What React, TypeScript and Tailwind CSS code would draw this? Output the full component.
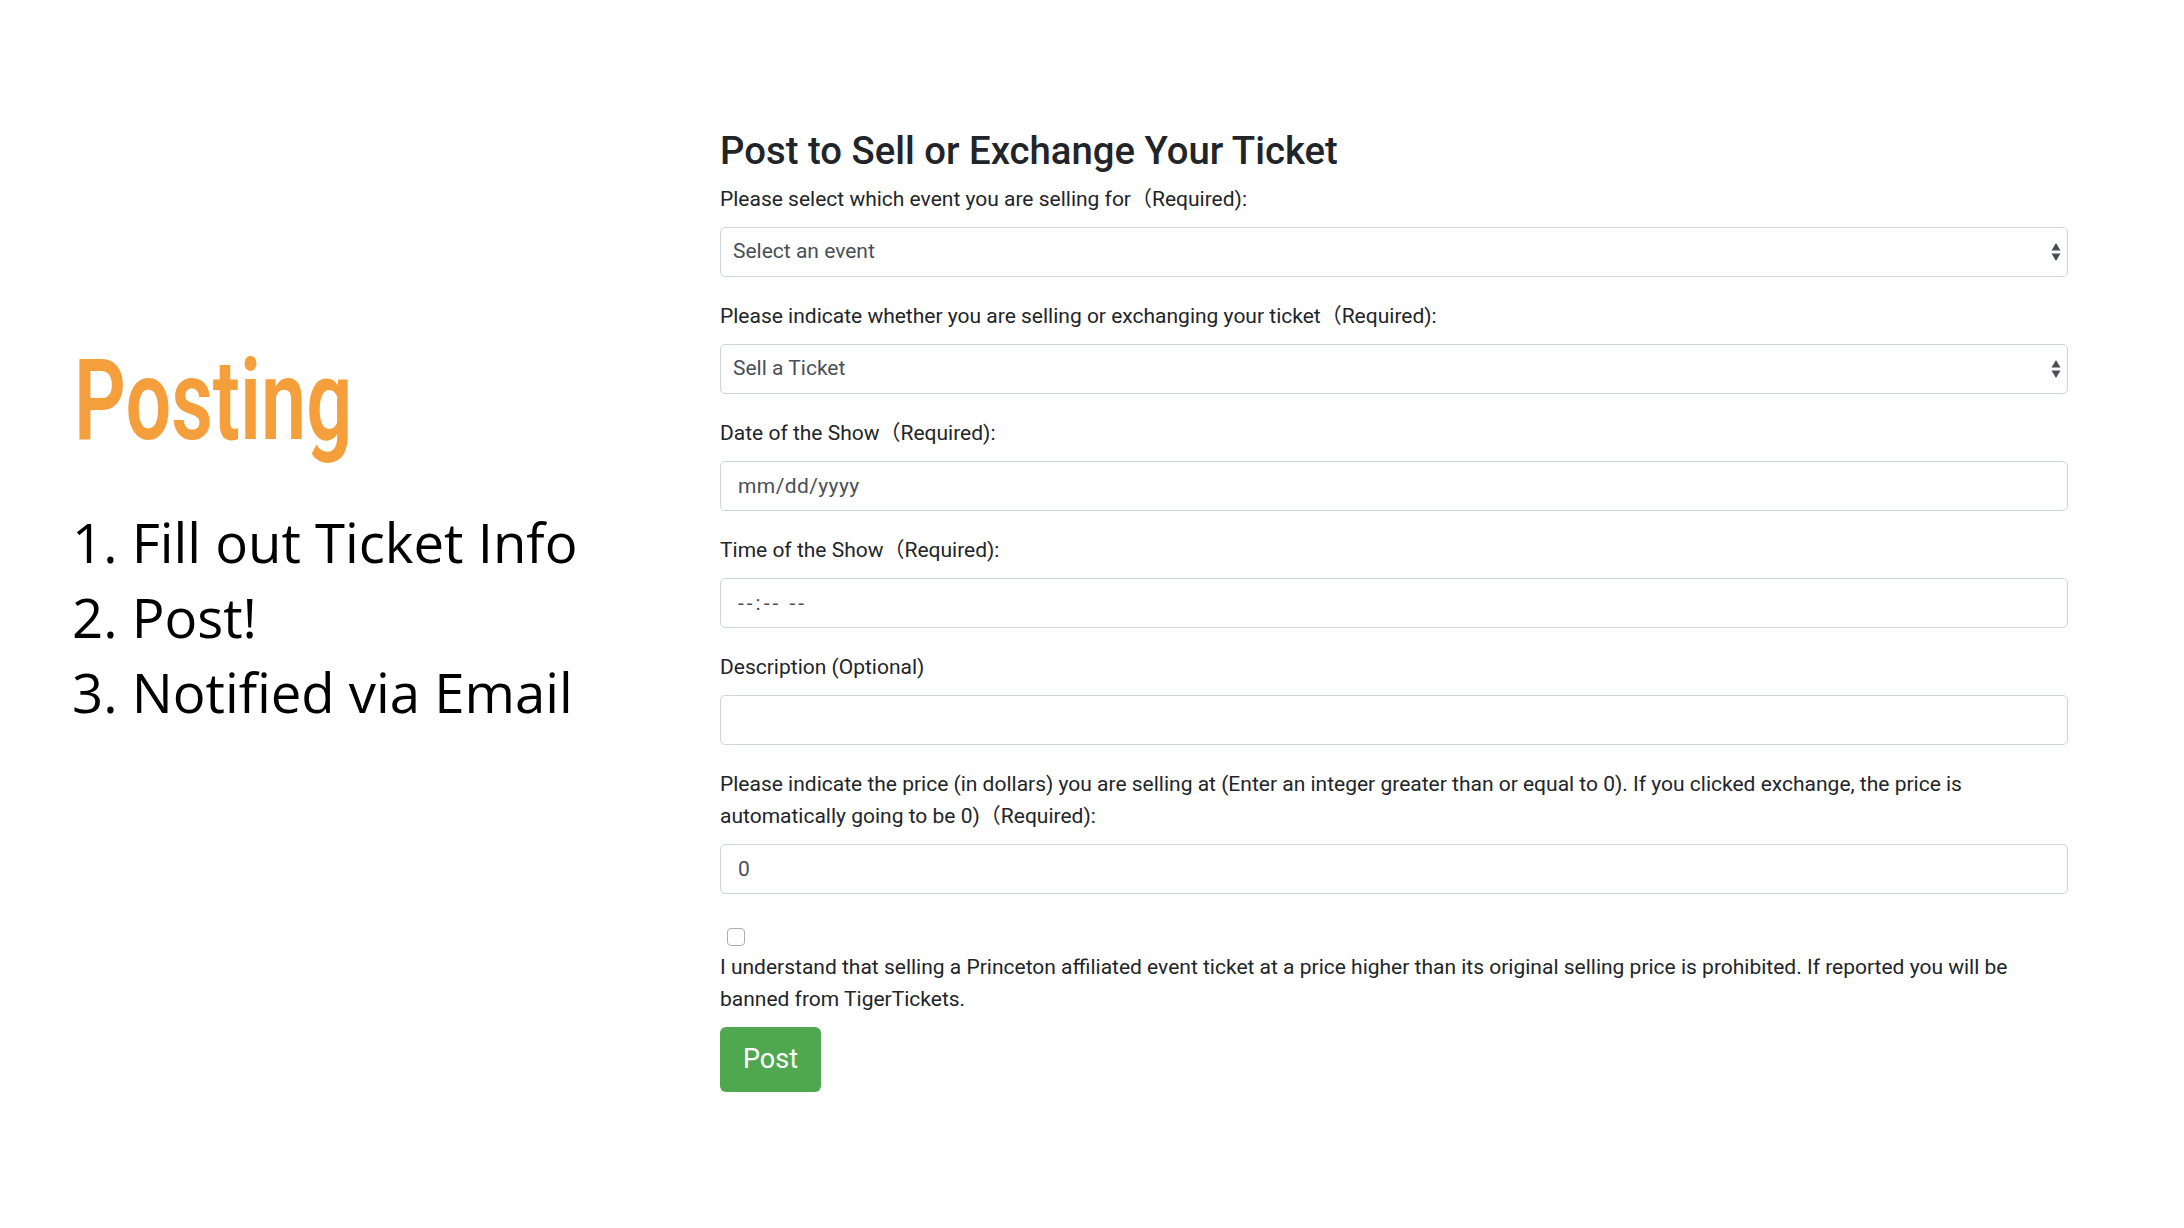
import React from "react";

const FORM_FONT = { fontFamily: "Roboto, 'Noto Sans CJK SC', sans-serif" };

const STEPS = ["1. Fill out Ticket Info", "2. Post!", "3. Notified via Email"];

function UpDownArrows(props: React.SVGProps<SVGSVGElement>) {
  return (
    <svg viewBox="0 0 10 20" aria-hidden="true" {...props}>
      <path d="M5 1L9.5 8.5H0.5z" fill="#4a4f55" />
      <path d="M5 19L9.5 11.5H0.5z" fill="#4a4f55" />
    </svg>
  );
}

function Label({ children }: { children: React.ReactNode }) {
  return <label className="block mb-[12px] text-[21px] leading-[32px] text-[#212529]">{children}</label>;
}

function SelectField({ options }: { options: string[] }) {
  return (
    <div className="relative">
      <select
        className="block w-full h-[50px] appearance-none rounded-[5px] border border-[#ced4da] bg-white pl-[12px] pr-[30px] text-[21px] text-[#495057] outline-none"
        style={FORM_FONT}
      >
        {options.map((o) => (
          <option key={o}>{o}</option>
        ))}
      </select>
      <UpDownArrows className="pointer-events-none absolute right-[7px] top-[15px] h-[20px] w-[10px]" />
    </div>
  );
}

function TextField({ placeholder, value, wide }: { placeholder?: string; value?: string; wide?: boolean }) {
  return (
    <input
      type="text"
      placeholder={placeholder}
      defaultValue={value}
      className={
        "block w-full h-[50px] rounded-[5px] border border-[#ced4da] bg-white px-[17px] text-[21px] text-[#495057] placeholder:text-[#495057] outline-none " +
        (wide ? "tracking-[3px]" : "tracking-[0.4px]")
      }
      style={FORM_FONT}
    />
  );
}

export default function App() {
  return (
    <div className="flex h-[1228px] w-full bg-white">
      <aside className="w-[720px] shrink-0 pl-[72px] pt-[343px]">
        <h1
          className="ml-[2px] inline-block origin-left scale-x-[0.71] text-[114px] leading-none font-semibold text-[#f49f3c]"
          style={{ fontFamily: "Roboto, sans-serif" }}
        >
          Posting
        </h1>
        <ol className="mt-[48px] text-[54.5px] leading-[75px] text-black" style={{ fontFamily: "'Open Sans', sans-serif" }}>
          {STEPS.map((s) => (
            <li key={s}>{s}</li>
          ))}
        </ol>
      </aside>

      <main className="w-[1348px] shrink-0 pt-[129px]" style={FORM_FONT}>
        <h2 className="mb-[10px] text-[38.3px] leading-[44px] font-medium text-[#212529]">
          Post to Sell or Exchange Your Ticket
        </h2>

        <div className="mb-[23px]">
          <Label>Please select which event you are selling for（Required):</Label>
          <SelectField options={["Select an event"]} />
        </div>

        <div className="mb-[23px]">
          <Label>Please indicate whether you are selling or exchanging your ticket（Required):</Label>
          <SelectField options={["Sell a Ticket", "Exchange a Ticket"]} />
        </div>

        <div className="mb-[23px]">
          <Label>Date of the Show（Required):</Label>
          <TextField placeholder="mm/dd/yyyy" />
        </div>

        <div className="mb-[23px]">
          <Label>Time of the Show（Required):</Label>
          <TextField placeholder="--:-- --" wide />
        </div>

        <div className="mb-[23px]">
          <Label>Description (Optional)</Label>
          <TextField />
        </div>

        <div>
          <Label>
            Please indicate the price (in dollars) you are selling at (Enter an integer greater than or equal to 0). If
            you clicked exchange, the price is automatically going to be 0)（Required):
          </Label>
          <TextField value="0" />
        </div>

        <div className="mt-[34px]">
          <input
            type="checkbox"
            className="ml-[7px] block h-[18px] w-[18px] appearance-none rounded-[4px] border border-[#a9adb2] bg-white"
          />
          <p className="mt-[5px] text-[21px] leading-[32px] text-[#212529]">
            I understand that selling a Princeton affiliated event ticket at a price higher than its original selling
            price is prohibited. If reported you will be banned from TigerTickets.
          </p>
        </div>

        <button className="mt-[12px] h-[65px] w-[101px] rounded-[6px] bg-[#4fa84f] text-[27px] text-white">
          Post
        </button>
      </main>
    </div>
  );
}
